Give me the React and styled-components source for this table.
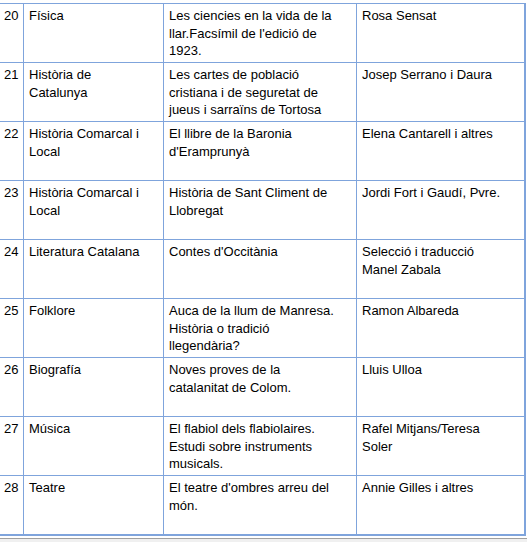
import styled, { createGlobalStyle } from "styled-components";

const GlobalStyle = createGlobalStyle`
  html, body {
    margin: 0;
    padding: 0;
    background: #ffffff;
  }
  body {
    font-family: "Liberation Sans", Arial, sans-serif;
    color: #000000;
  }
`;

const Page = styled.div`
  width: 527px;
  height: 542px;
  overflow: hidden;
  background: #ffffff;
  display: flex;
  flex-direction: column;
`;

const Sheet = styled.div`
  padding-top: 3px;
  background: #ffffff;
`;

const Table = styled.table`
  border-collapse: collapse;
  table-layout: fixed;
  width: 525px;
  margin-left: -1px;
  border-top: 1px solid #c6d6f0;
`;

const Row = styled.tr`
  height: 59px;
`;

const Cell = styled.td`
  border: 1px solid #7fa4dc;
  border-bottom-width: ${(p) => (p.last ? "2px" : "1px")};
  border-right-width: ${(p) => (p.edge ? "2px" : "1px")};
  border-top-color: ${(p) => (p.first ? "#7fa4dc" : "#7fa4dc")};
  vertical-align: top;
  padding: 3px 4px 0 5px;
  font-size: 13px;
  line-height: 17.5px;
  white-space: nowrap;
  overflow: hidden;
`;

const Num = styled(Cell)`
  padding-left: 4px;
  padding-right: 0;
`;

const Line = styled.div``;

const Footer = styled.div`
  margin-top: 2px;
  border-top: 1px solid #a0a0a0;
  flex: 1;
  background: #f0f0f0;
`;

const rows = [
  ["20", ["Física"], ["Les ciencies en la vida de la", "llar.Facsímil de l'edició de", "1923."], ["Rosa Sensat"]],
  ["21", ["Història de", "Catalunya"], ["Les cartes de població", "cristiana i de seguretat de", "jueus i sarraïns de Tortosa"], ["Josep Serrano i Daura"]],
  ["22", ["Història Comarcal i", "Local"], ["El llibre de la Baronia", "d'Eramprunyà"], ["Elena Cantarell i altres"]],
  ["23", ["Història Comarcal i", "Local"], ["Història de Sant Climent de", "Llobregat"], ["Jordi Fort i Gaudí, Pvre."]],
  ["24", ["Literatura Catalana"], ["Contes d'Occitània"], ["Selecció i traducció", "Manel Zabala"]],
  ["25", ["Folklore"], ["Auca de la llum de Manresa.", "Història o tradició", "llegendària?"], ["Ramon Albareda"]],
  ["26", ["Biografía"], ["Noves proves de la", "catalanitat de Colom."], ["Lluis Ulloa"]],
  ["27", ["Música"], ["El flabiol dels flabiolaires.", "Estudi sobre instruments", "musicals."], ["Rafel Mitjans/Teresa", "Soler"]],
  ["28", ["Teatre"], ["El teatre d'ombres arreu del", "món."], ["Annie Gilles i altres"]],
];

const Lines = ({ items }) => items.map((t, i) => <Line key={i}>{t}</Line>);

const App = () => {
  return (
    <Page>
      <GlobalStyle />
      <Sheet>
        <Table>
          <colgroup>
            <col style={{ width: 24 }} />
            <col style={{ width: 140 }} />
            <col style={{ width: 193 }} />
            <col style={{ width: 168 }} />
          </colgroup>
          <tbody>
            {rows.map(([num, subject, title, author], index) => {
              const last = index === rows.length - 1;
              return (
                <Row key={num}>
                  <Num last={last}>{num}</Num>
                  <Cell last={last}>
                    <Lines items={subject} />
                  </Cell>
                  <Cell last={last}>
                    <Lines items={title} />
                  </Cell>
                  <Cell last={last} edge>
                    <Lines items={author} />
                  </Cell>
                </Row>
              );
            })}
          </tbody>
        </Table>
      </Sheet>
      <Footer />
    </Page>
  );
};

export default App;
